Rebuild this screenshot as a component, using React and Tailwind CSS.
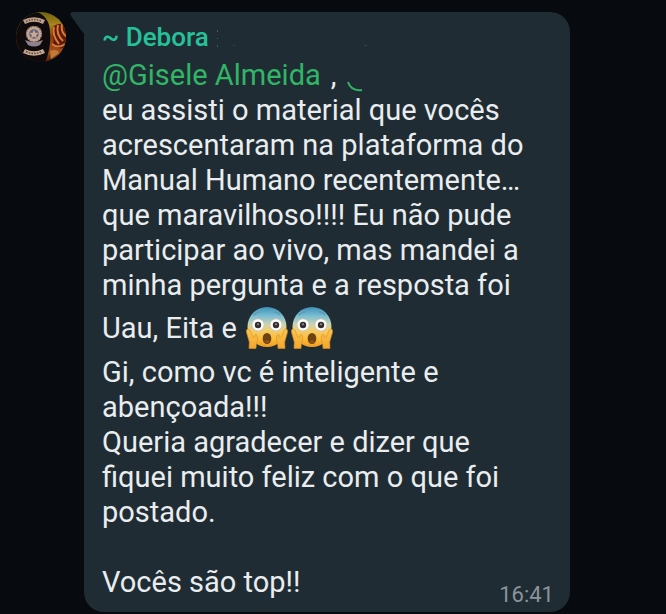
import React from 'react';

function Avatar() {
  return (
    <svg className="size-[50px] shrink-0" viewBox="0 0 50 50" role="img" aria-label="Debora">
      <defs>
        <clipPath id="avatar-clip">
          <circle cx="25" cy="25" r="25" />
        </clipPath>
        <linearGradient id="avatar-glow" x1="0" y1="0" x2="0" y2="1">
          <stop offset="0" stopColor="#6e6212" />
          <stop offset="0.25" stopColor="#a8841c" />
          <stop offset="0.5" stopColor="#8a3e12" />
          <stop offset="0.8" stopColor="#a04e1a" />
          <stop offset="1" stopColor="#4a1e08" />
        </linearGradient>
      </defs>
      <g clipPath="url(#avatar-clip)">
        <rect width="50" height="50" fill="url(#avatar-glow)" />
        <path d="M37 15c4-4 9-4 13-2v22c-5 3-10 1-13-3 2-5-2-11 0-17z" fill="#5c1a0c" />
        <g fill="none" stroke="#d97a36" strokeWidth="2">
          <path d="M38 15c-2 7 1 12 5 17" />
          <path d="M42 13c-2 7 1 12 5 16" />
          <path d="M46 12c-1 7 1 10 5 13" />
          <path d="M36 32c5 4 9 3 13 0" />
        </g>
        <path d="M34 39c4-2 8-1 9 2l-8 6z" fill="#c27a36" />
        <path d="M-1 0h22c8 3 13 10 13 20 1 11-1 21-5 31H-1z" fill="#0f0b0c" />
        {/* badge */}
        <path d="M8 10q10-5 20 0" fill="none" stroke="#bda08a" strokeWidth="4.500" />
        <path d="M10 9.500q8-4 16 0" fill="none" stroke="#6b4a3c" strokeWidth="1.400" strokeDasharray="1.500 1.300" />
        <circle cx="18" cy="22" r="8" fill="#c4a58e" />
        <circle cx="18" cy="22" r="7.600" fill="none" stroke="#7d5a4a" strokeWidth="1.200" strokeDasharray="1.500 1.700" />
        <circle cx="18" cy="22" r="4.800" fill="#57648c" />
        <path d="M18 17.500l1.300 3.200 3.400.2-2.600 2.200.8 3.400-2.900-1.900-2.900 1.900.8-3.400-2.600-2.200 3.400-.2z" fill="#d0a88c" />
        <path d="M9 28q9 4 18 0l-3 5q-6 3-12 0z" fill="#8f8290" />
        <path d="M8 39q10 5 20 0" fill="none" stroke="#c2a68e" strokeWidth="4.500" />
        <path d="M10 39.500q8 4 16 0" fill="none" stroke="#64463a" strokeWidth="1.400" strokeDasharray="1.600 1.200" />
      </g>
    </svg>
  );
}

function ScreamEmoji() {
  return (
    <svg className="mx-px mb-1.5 inline-block h-[43px] w-[43px] align-middle" viewBox="0 0 43 43" role="img" aria-label="😱">
      <defs>
        <linearGradient id="scream-face" x1="0" y1="0" x2="0" y2="1">
          <stop offset="0" stopColor="#3f91b8" />
          <stop offset="0.22" stopColor="#79bdd2" />
          <stop offset="0.42" stopColor="#c5d3b5" />
          <stop offset="0.58" stopColor="#f3cd6c" />
          <stop offset="0.8" stopColor="#fbbd38" />
          <stop offset="1" stopColor="#f09b22" />
        </linearGradient>
        <linearGradient id="scream-hand" x1="0" y1="0" x2="0" y2="1">
          <stop offset="0" stopColor="#f9c650" />
          <stop offset="1" stopColor="#f3a62e" />
        </linearGradient>
      </defs>
      <ellipse cx="22" cy="21" rx="19.500" ry="20" fill="url(#scream-face)" />
      <path d="M9 9q3-3 6-3M29 6q4 0 6 3" fill="none" stroke="#5a9db4" strokeWidth="1.300" strokeLinecap="round" />
      <circle cx="13" cy="19" r="6.400" fill="#d1c8b4" />
      <circle cx="31" cy="19" r="6.400" fill="#d1c8b4" />
      <circle cx="13" cy="18.800" r="5.600" fill="#fff" />
      <circle cx="31" cy="18.800" r="5.600" fill="#fff" />
      <circle cx="13" cy="19" r="3.200" fill="#35302f" />
      <circle cx="31" cy="19" r="3.200" fill="#35302f" />
      <circle cx="13" cy="18.300" r="1" fill="#9a9490" />
      <circle cx="31" cy="18.300" r="1" fill="#9a9490" />
      <ellipse cx="22" cy="32.500" rx="4.300" ry="5.500" fill="#6d4110" />
      <path d="M19 35.500q3-3 6 0-3 4-6 0z" fill="#8f5216" />
      <path d="M3 23c-1.600 0-1.800 2-1.300 4l2.600 9-.3 6.500h7l.4-5c1.300-2 1.600-5 .6-8-.7-1.700-2-1.500-2.200.5 0 1.500-1 2-1.800 1-1.600-2-2.500-8-5-8z" fill="url(#scream-hand)" stroke="#dc8a20" strokeWidth="0.600" />
      <path d="M41 23c1.600 0 1.800 2 1.300 4l-2.600 9 .3 6.500h-7l-.4-5c-1.300-2-1.600-5-.6-8 .7-1.700 2-1.500 2.200.5 0 1.500 1 2 1.800 1 1.600-2 2.500-8 5-8z" fill="url(#scream-hand)" stroke="#dc8a20" strokeWidth="0.600" />
    </svg>
  );
}

function App() {
  return (
    <main className="flex min-h-screen items-start bg-[#070b10] pt-3 pl-4 pr-24 font-['Roboto',sans-serif]">
      <Avatar />

      {/* Bubble tail */}
      <svg className="ml-1 h-6 w-[14px] shrink-0" viewBox="0 0 14 24" aria-hidden="true">
        <path d="M14 0H3Q-1 0 1 4L14 22z" fill="#202c33" />
      </svg>

      <article className="min-w-0 flex-1 rounded-[20px] rounded-tl-none bg-[#202c33] pt-2 pr-8 pb-3 pl-[18px] text-[29px] leading-[35px] text-[#e9edef]">
        <header className="mb-[3px] flex items-center gap-2">
          <h2 className="text-[26px] font-medium text-[#25c29a]">~ Debora</h2>
          {/* Leftovers of the erased surname */}
          <svg className="h-5 w-[152px]" viewBox="0 0 152 20" fill="#2b6a60" aria-hidden="true">
            <path d="M0 2h1v2H0zM0 10h1v1H0zM0 17h1v2H0z" />
            <path d="M16 17h2v1h-2zM147 17h3v1h-3z" fill="#2c4248" />
          </svg>
        </header>

        <p className="flex items-center">
          <a href="#gisele" className="text-[#31b566]">@Gisele Almeida</a>
          <span className="ml-2.5">,</span>
          <svg className="mt-5 ml-2.5 h-3 w-4" viewBox="0 0 16 12" fill="none" aria-hidden="true">
            <path d="M1 2c2 6 7 9 14 8" stroke="#31b566" strokeWidth="2" />
          </svg>
        </p>
        <p>
          eu assisti o material que vocês acrescentaram na plataforma do Manual Humano
          recentemente… que maravilhoso!!!! Eu não pude participar ao vivo, mas mandei a minha
          pergunta e a resposta foi
        </p>
        <p className="leading-[51px]">
          Uau, Eita e <ScreamEmoji /><ScreamEmoji />
        </p>
        <p>Gi, como vc é inteligente e abençoada!!!</p>
        <p>Queria agradecer e dizer que fiquei muito feliz com o que foi postado.</p>

        <div className="mt-[35px] flex items-end justify-between">
          <p>Vocês são top!!</p>
          <time className="-mr-4 -mb-3 text-[22px] text-[#8a949a]">16:41</time>
        </div>
      </article>
    </main>
  );
}

export default App;
